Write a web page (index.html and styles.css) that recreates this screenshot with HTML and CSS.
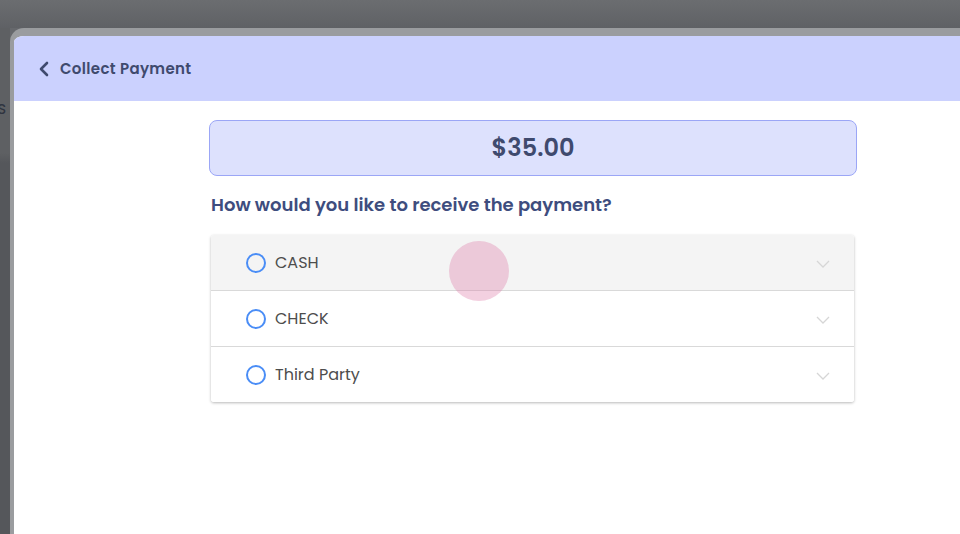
FILE: index.html
```html
<!DOCTYPE html>
<html>
<head>
<meta charset="utf-8">
<link rel="stylesheet" href="styles.css">
</head>
<body>
<div class="screen">
  <div class="topbar"></div>
  <div class="stage">
    <div class="behind"><span class="behind-text">s</span></div>
    <div class="modal">
      <header class="modal-header">
        <svg class="back" width="12" height="16" viewBox="0 0 12 16"><path d="M9 2 L3 8 L9 14" fill="none" stroke="#3f4a6e" stroke-width="2.6" stroke-linecap="round" stroke-linejoin="round"/></svg>
        <span class="title">Collect Payment</span>
      </header>
      <main class="content">
        <div class="amount">$35.00</div>
        <h2 class="question">How would you like to receive the payment?</h2>
        <div class="options">
          <div class="option active">
            <span class="radio"></span>
            <span class="label">CASH</span>
            <svg class="chev" width="14" height="8" viewBox="0 0 14 8"><path d="M1 1 L7 7 L13 1" fill="none" stroke="#d6d6d6" stroke-width="1.3"/></svg>
          </div>
          <div class="option">
            <span class="radio"></span>
            <span class="label">CHECK</span>
            <svg class="chev" width="14" height="8" viewBox="0 0 14 8"><path d="M1 1 L7 7 L13 1" fill="none" stroke="#d6d6d6" stroke-width="1.3"/></svg>
          </div>
          <div class="option">
            <span class="radio"></span>
            <span class="label">Third Party</span>
            <svg class="chev" width="14" height="8" viewBox="0 0 14 8"><path d="M1 1 L7 7 L13 1" fill="none" stroke="#d6d6d6" stroke-width="1.3"/></svg>
          </div>
          <span class="touch"></span>
        </div>
      </main>
    </div>
  </div>
</div>
</body>
</html>
```
FILE: styles.css
```css
* { box-sizing: border-box; }
html, body { margin: 0; padding: 0; }
body {
  width: 960px;
  height: 534px;
  overflow: hidden;
  background: #66686c;
  font-family: "Poppins", "Open Sans", sans-serif;
}
.screen {
  display: flex;
  flex-direction: column;
  height: 534px;
}
.topbar {
  height: 28px;
  flex: none;
  background: linear-gradient(#6b6d70, #5f6165);
}
.stage {
  flex: 1;
  display: flex;
  min-height: 0;
}
.behind {
  width: 10px;
  flex: none;
  background: linear-gradient(#5e6063 0, #5e6063 125px, #55575b 135px, #55575b 100%);
  overflow: hidden;
  display: flex;
  justify-content: flex-end;
  padding-top: 70px;
}
.behind-text {
  font-size: 17px;
  color: #2f3440;
  line-height: 20px;
  margin-right: 4px;
}
.modal {
  width: 1000px;
  flex: none;
  background: #fff;
  border-left: 4px solid #9a9c9f;
  border-top: 8px solid #9a9c9f;
  border-top-left-radius: 14px;
  overflow: hidden;
  display: flex;
  flex-direction: column;
}
.modal-header {
  height: 65px;
  flex: none;
  background: #cbd1fe;
  display: flex;
  align-items: center;
  padding-left: 24px;
  gap: 10px;
}
.title {
  font-size: 15px;
  font-weight: 600;
  color: #3f4a6e;
  letter-spacing: 0.35px;
}
.content {
  padding: 19px 0 0 195px;
  width: 843px;
}
.amount {
  height: 56px;
  background: #dde1fd;
  border: 1px solid #9ba6f6;
  border-radius: 8px;
  display: flex;
  align-items: center;
  justify-content: center;
  font-size: 24px;
  font-weight: 600;
  color: #3f4a6e;
  padding-bottom: 1px;
}
.question {
  margin: 17px 0 0 2px;
  font-size: 18px;
  font-weight: 600;
  color: #3e4d7e;
  line-height: 24px;
}
.options {
  position: relative;
  margin: 18px 3px 0 2px;
  border-radius: 3px;
  box-shadow: 0 1px 3px rgba(0,0,0,0.28);
}
.option {
  height: 56px;
  display: flex;
  align-items: center;
  padding-left: 35px;
  padding-right: 24px;
  background: #fff;
  border-top: 1px solid #d9d9d9;
}
.option:first-child { border-top: none; border-radius: 3px 3px 0 0; height: 55px; }
.option:nth-child(3) { border-radius: 0 0 3px 3px; }
.option.active { background: #f4f4f4; }
.radio {
  width: 20px;
  height: 20px;
  border: 2px solid #4a8df6;
  border-radius: 50%;
  flex: none;
}
.label {
  margin-left: 9px;
  font-size: 16px;
  font-weight: 400;
  color: #4d4d4d;
  flex: 1;
}
.chev { flex: none; margin-top: 3px; }
.touch {
  position: absolute;
  left: 238px;
  top: 6px;
  width: 60px;
  height: 60px;
  border-radius: 50%;
  background: rgba(222, 120, 165, 0.35);
}
```
